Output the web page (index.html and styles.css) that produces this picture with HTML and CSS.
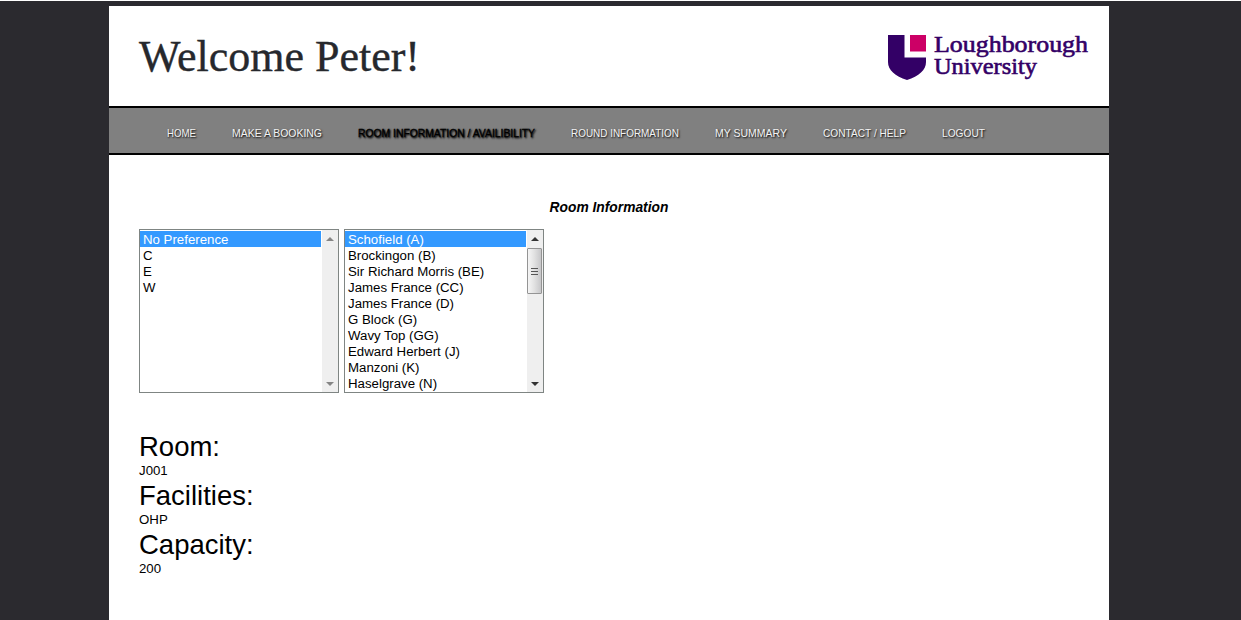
FILE: index.html
```html
<!DOCTYPE html>
<html lang="en">
<head>
<meta charset="utf-8">
<title>Room Information</title>
<link rel="stylesheet" href="styles.css">
</head>
<body>
<div class="page">
  <header class="header">
    <svg class="title" width="300" height="60" role="heading" aria-level="1"><text x="0" y="40" textLength="281" lengthAdjust="spacingAndGlyphs">Welcome Peter!</text></svg>
    <svg class="logo" width="202" height="48" viewBox="0 0 202 48">
      <path class="shield" d="M0 1H16.5V23.5H38V28C38 36 31 42 19 46C7 42 0 36 0 28Z"/>
      <path class="square" d="M22 1H38V17.500H22Z"/>
      <text x="46" y="18" textLength="154" lengthAdjust="spacingAndGlyphs">Loughborough</text>
      <text x="46" y="40" textLength="103" lengthAdjust="spacingAndGlyphs">University</text>
    </svg>
  </header>
  <nav class="nav">
    <svg width="29" height="18"><text y="13" textLength="29" lengthAdjust="spacingAndGlyphs">HOME</text></svg>
    <svg width="90" height="18"><text y="13" textLength="90" lengthAdjust="spacingAndGlyphs">MAKE A BOOKING</text></svg>
    <svg class="current" width="177" height="18"><text y="13" textLength="177" lengthAdjust="spacingAndGlyphs">ROOM INFORMATION / AVAILIBILITY</text></svg>
    <svg width="108" height="18"><text y="13" textLength="108" lengthAdjust="spacingAndGlyphs">ROUND INFORMATION</text></svg>
    <svg width="72" height="18"><text y="13" textLength="72" lengthAdjust="spacingAndGlyphs">MY SUMMARY</text></svg>
    <svg width="83" height="18"><text y="13" textLength="83" lengthAdjust="spacingAndGlyphs">CONTACT / HELP</text></svg>
    <svg width="43" height="18"><text y="13" textLength="43" lengthAdjust="spacingAndGlyphs">LOGOUT</text></svg>
  </nav>
  <main class="content">
    <h2 class="heading">Room Information</h2>
    <div class="lists">
      <div class="list">
        <ul class="options"><li class="selected">No Preference</li><li>C</li><li>E</li><li>W</li></ul>
        <div class="scrollbar disabled">
          <svg width="16" height="17"><path d="M4 11L8 7L12 11Z"/></svg>
          <svg width="16" height="17"><path d="M4 7H12L8 11Z"/></svg>
        </div>
      </div>
      <div class="list">
        <ul class="options"><li class="selected">Schofield (A)</li><li>Brockingon (B)</li><li>Sir Richard Morris (BE)</li><li>James France (CC)</li><li>James France (D)</li><li>G Block (G)</li><li>Wavy Top (GG)</li><li>Edward Herbert (J)</li><li>Manzoni (K)</li><li>Haselgrave (N)</li></ul>
        <div class="scrollbar">
          <svg width="16" height="18"><path d="M4 11L8 7L12 11Z"/></svg>
          <div class="thumb"><i></i><i></i><i></i></div>
          <svg class="down" width="16" height="17"><path d="M4 7H12L8 11Z"/></svg>
        </div>
      </div>
    </div>
    <dl class="details">
      <dt>Room:</dt><dd>J001</dd>
      <dt>Facilities:</dt><dd>OHP</dd>
      <dt>Capacity:</dt><dd>200</dd>
    </dl>
  </main>
</div>
</body>
</html>
```
FILE: styles.css
```css
* { box-sizing: border-box; }
html { background: #2b2a2f; }
body {
  margin: 0;
  height: 620px;
  overflow: hidden;
  padding: 5px 132px 0 109px;
  border-top: 1px solid #fff;
  font-family: "Liberation Sans", Arial, sans-serif;
  font-size: 13.25px;
  color: #000;
}
.page { width: 1000px; height: 614px; background: #fff; }
.header {
  height: 100px;
  padding: 25px 19px 0 30px;
  display: flex;
  justify-content: space-between;
}
svg { display: block; flex: none; overflow: visible; }
.title { font: 45px "Liberation Serif", Georgia, serif; fill: #26282d; stroke: #26282d; stroke-width: .4px; }
.logo { margin-top: 3px; font: 23px "Liberation Serif", serif; fill: #330066; }
.logo text { stroke: #330066; stroke-width: .6px; }
.square { fill: #cc0066; }
.nav {
  height: 49px;
  border: solid #000;
  border-width: 2px 0;
  background: #808080;
  padding: 16px 0 0 58px;
  display: flex;
  gap: 36px;
  font-size: 11.5px;
  fill: #f4f4f4;
}
.nav text { text-shadow: 1px 1px 2px #000; }
.nav .current { fill: #000; stroke: #000; stroke-width: .3px; }
.content { padding: 45px 30px 0; }
.heading { margin: 0; font-size: 13.8px; line-height: 16px; font-style: italic; text-align: center; }
.lists { margin-top: 13px; display: flex; gap: 5px; }
.list {
  width: 200px;
  height: 164px;
  border: 1px solid #7f8583;
  display: flex;
  justify-content: space-between;
}
.options { width: 181px; margin: 0; padding: 1px 0; list-style: none; line-height: 17px; }
.options li { padding-left: 3px; white-space: nowrap; height: 16px; }
.options .selected { background: #3399ff; color: #fff; }
.scrollbar {
  width: 16px;
  background: #efefef;
  display: flex;
  flex-direction: column;
  justify-content: space-between;
  fill: #333;
}
.disabled { fill: #858585; }
.thumb {
  width: 15px;
  height: 46px;
  border: 1px solid #949494;
  border-radius: 1px;
  background: linear-gradient(90deg, #f5f5f5, #e3e3e3 45%, #c7c7c9);
  display: flex;
  flex-direction: column;
  align-items: center;
  justify-content: center;
  gap: 2px;
}
.thumb i { width: 7px; height: 1px; background: #555; }
.down { margin-top: auto; }
.details { margin: 38px 0 0; }
dt { font-size: 27.5px; line-height: 32px; height: 31px; }
dd { margin: 0; line-height: 18px; height: 18px; }
```
